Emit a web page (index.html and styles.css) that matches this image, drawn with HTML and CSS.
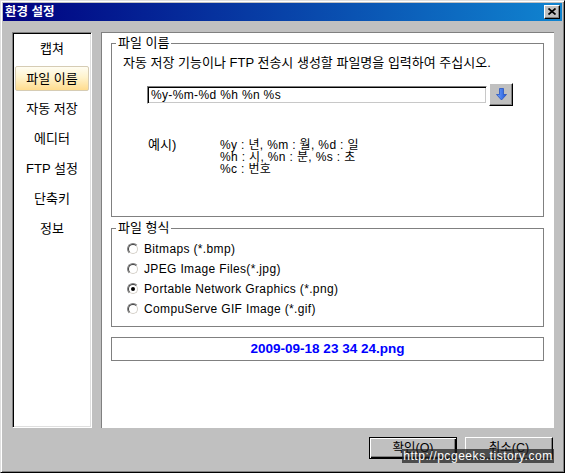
FILE: index.html
```html
<!DOCTYPE html>
<html lang="ko">
<head>
<meta charset="utf-8">
<title>환경 설정</title>
<link rel="stylesheet" href="styles.css">
</head>
<body>
<div class="window">
  <div class="titlebar">
    <span class="title">환경 설정</span>
    <span class="close-btn">
      <svg width="8" height="7" viewBox="0 0 8 7"><path d="M0.5 0.5L7.5 6.5M7.5 0.5L0.5 6.5" stroke="#000" stroke-width="1.7" fill="none"/></svg>
    </span>
  </div>
  <div class="client">
    <div class="sidebar ko">
      <div class="nav-item">캡쳐</div>
      <div class="nav-item selected">파일 이름</div>
      <div class="nav-item">자동 저장</div>
      <div class="nav-item">에디터</div>
      <div class="nav-item">FTP 설정</div>
      <div class="nav-item">단축키</div>
      <div class="nav-item">정보</div>
    </div>
    <div class="main">
      <fieldset class="group">
        <legend class="ko">파일 이름</legend>
        <div class="group-body name-body">
          <div class="desc ko">자동 저장 기능이나 FTP 전송시 생성할 파일명을 입력하여 주십시오.</div>
          <div class="input-row">
            <div class="text-input">%y-%m-%d %h %n %s</div>
            <span class="drop-btn">
              <svg width="11" height="13" viewBox="0 0 11 13">
                <defs>
                  <linearGradient id="ag" x1="0" y1="0" x2="1" y2="0">
                    <stop offset="0" stop-color="#6fa4ff"/>
                    <stop offset="1" stop-color="#1f55d8"/>
                  </linearGradient>
                </defs>
                <path d="M3.5 0.5H7.5V6.5H10.5L5.5 12L0.5 6.5H3.5Z" fill="url(#ag)" stroke="#2a55c0" stroke-width="0.8"/>
              </svg>
            </span>
          </div>
          <div class="example">
            <div class="ex-label ko">예시)</div>
            <div class="ex-lines">
              <div>%y : 년, %m : 월, %d : 일</div>
              <div>%h : 시, %n : 분, %s : 초</div>
              <div>%c : 번호</div>
            </div>
          </div>
        </div>
      </fieldset>
      <fieldset class="group format-group">
        <legend class="ko">파일 형식</legend>
        <div class="group-body format-body">
          <div class="radio-row"><span class="radio"><span class="radio-in"></span></span><span>Bitmaps (*.bmp)</span></div>
          <div class="radio-row"><span class="radio"><span class="radio-in"></span></span><span>JPEG Image Files(*.jpg)</span></div>
          <div class="radio-row"><span class="radio"><span class="radio-in"><span class="dot"></span></span></span><span>Portable Network Graphics (*.png)</span></div>
          <div class="radio-row"><span class="radio"><span class="radio-in"></span></span><span>CompuServe GIF Image (*.gif)</span></div>
        </div>
      </fieldset>
      <div class="result">2009-09-18 23 34 24.png</div>
    </div>
  </div>
  <div class="footer">
    <span class="btn default">확인(O)</span>
    <span class="btn">취소(C)</span>
  </div>
  <div class="watermark">http://pcgeeks.tistory.com</div>
</div>
</body>
</html>
```
FILE: styles.css
```css
* { box-sizing: border-box; }
html, body { margin: 0; padding: 0; background: #c0c0c0; }
body {
  font-family: "Liberation Sans", "Noto Sans CJK KR", sans-serif;
  font-size: 12px;
  letter-spacing: 0.35px;
  color: #000;
}
.ko {
  font-size: 13px;
  letter-spacing: 0;
}
.window {
  position: relative;
  width: 565px;
  height: 473px;
  background: #c0c0c0;
  border: 1px solid;
  border-color: #dfdfdf #000 #000 #dfdfdf;
  box-shadow: inset 1px 1px #fff, inset -1px -1px #808080;
  padding: 2px;
}
.titlebar {
  height: 18px;
  background: linear-gradient(to right, #000080, #1084d0);
  display: flex;
  align-items: center;
  justify-content: space-between;
  padding: 0 2px 0 2px;
}
.title {
  color: #fff;
  font-weight: bold;
  font-size: 12.5px;
  letter-spacing: 0;
  line-height: 14px;
}
.close-btn {
  width: 16px;
  height: 14px;
  background: #c0c0c0;
  border: 1px solid;
  border-color: #fff #000 #000 #fff;
  box-shadow: inset -1px -1px #808080;
  display: flex;
  align-items: center;
  justify-content: center;
  padding: 0 1px 1px 0;
}
.close-btn svg { display: block; }
.client {
  display: flex;
  padding: 11px 0 0 9px;
}
.sidebar {
  width: 80px;
  height: 396px;
  background: #fff;
  border: 1px solid;
  border-color: #808080 #fff #fff #808080;
  box-shadow: inset 1px 1px #000, inset -1px -1px #dfdfdf;
  padding: 3px 2px 0 2px;
}
.nav-item {
  height: 25px;
  margin: 0 0 5px 0;
  border: 1px solid transparent;
  line-height: 23px;
  text-align: center;
  white-space: nowrap;
}
.nav-item.selected {
  background: linear-gradient(#fffdf2, #fff3cc 45%, #ffdc8e);
  border-color: #d6ccb4;
  border-radius: 2px;
}
.main {
  width: 453px;
  height: 396px;
  margin-left: 9px;
  background: #fff;
  border-top: 1px solid #808080;
  border-left: 1px solid #808080;
  padding-top: 4px;
}
.group {
  margin: 0 10px 0 9px;
  padding: 0;
  border: 1px solid #808080;
  min-width: 0;
}
.group legend {
  margin-left: 4px;
  padding: 0 2px;
  line-height: 12px;
}
.name-body {
  padding: 7px 0 41px 11px;
}
.desc {
  line-height: 14px;
  white-space: nowrap;
}
.input-row {
  display: flex;
  align-items: center;
  margin: 13px 0 0 24px;
  height: 23px;
}
.text-input {
  width: 340px;
  height: 18px;
  border: 1px solid;
  border-color: #808080 #fff #fff #808080;
  box-shadow: inset 1px 1px #000, inset -1px -1px #c8c8c8;
  padding: 0 0 0 3px;
  line-height: 16px;
  white-space: nowrap;
}
.drop-btn {
  width: 24px;
  height: 23px;
  margin-left: 2px;
  background: #c0c0c0;
  border: 1px solid;
  border-color: #fff #000 #000 #fff;
  box-shadow: inset -1px -1px #808080;
  display: flex;
  align-items: center;
  justify-content: center;
}
.drop-btn svg { display: block; }
.example {
  display: flex;
  margin: 33px 0 0 25px;
  line-height: 12px;
}
.ex-label { width: 72px; line-height: 12px; }
.format-group { margin-top: 5px; }
.format-body {
  padding: 5px 0 7px 15px;
}
.radio-row {
  display: flex;
  align-items: center;
  height: 20px;
  white-space: nowrap;
}
.radio {
  width: 12px;
  height: 12px;
  border-radius: 50%;
  border: 1px solid;
  border-color: #808080 #fff #fff #808080;
  margin-right: 5px;
  flex: none;
}
.radio-in {
  display: flex;
  align-items: center;
  justify-content: center;
  width: 10px;
  height: 10px;
  border-radius: 50%;
  border: 1px solid;
  border-color: #404040 #d4d0c8 #d4d0c8 #404040;
  background: #fff;
}
.dot {
  width: 4px;
  height: 4px;
  border-radius: 50%;
  background: #000;
}
.result {
  margin: 10px 10px 0 9px;
  height: 24px;
  border: 1px solid #808080;
  text-align: center;
  line-height: 22px;
  color: #0000ff;
  font-weight: bold;
  font-size: 13.5px;
  letter-spacing: 0;
}
.footer {
  display: flex;
  justify-content: flex-end;
  gap: 8px;
  margin-top: 9px;
  padding-right: 9px;
}
.btn {
  width: 88px;
  height: 22px;
  background: #c0c0c0;
  border: 1px solid;
  border-color: #fff #000 #000 #fff;
  box-shadow: inset -1px -1px #808080;
  text-align: center;
  line-height: 20px;
  font-size: 12.5px;
  letter-spacing: 0;
}
.btn.default {
  border: 1px solid #000;
  box-shadow: inset 1px 1px #fff, inset -1px -1px #000, inset -2px -2px #808080;
}
.watermark {
  position: absolute;
  left: 401px;
  top: 448px;
  width: 152px;
  height: 14px;
  background: rgba(30, 30, 30, 0.72);
  color: #fff;
  font-size: 12px;
  letter-spacing: 0.55px;
  line-height: 14px;
  text-align: center;
  white-space: nowrap;
}
```
